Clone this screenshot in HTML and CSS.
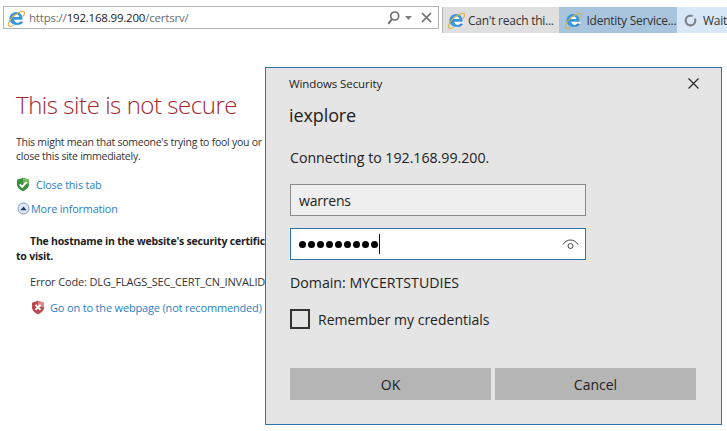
FILE: index.html
```html
<!DOCTYPE html>
<html lang="en">
<head>
<meta charset="utf-8">
<title>This site is not secure</title>
<link rel="stylesheet" href="styles.css">
</head>
<body>
<svg class="defs" width="0" height="0" aria-hidden="true">
  <defs>
    <g id="ie">
      <circle cx="10" cy="10.500" r="7.300" fill="#3a97da"/>
      <path d="M6.500 9c.5-2 2-3.200 3.800-3.200s3.100 1.200 3.500 3.200z" fill="#fff"/>
      <path d="M6.400 12h12v2.300h-3.800c-.9 1-2.200 1.400-3.500 1.100-1.500-.3-2.700-1.600-3.200-3.400z" fill="#fff"/>
      <path d="M14.700 14.300h3.300c-1 2.200-3.600 3.700-6.600 3.500 1.500-.4 2.600-1.800 3.300-3.500z" fill="#2f86cc"/>
      <path d="M1.600 18.200C.6 15.500 5 8.500 11 5.200c4-2.200 7-3.200 8-2.200s.4 3-1 5.200" fill="none" stroke="#dcae3f" stroke-width="1.200"/>
      <path d="M1.600 18.200c1 1.500 3.500 1.200 5.700 0" fill="none" stroke="#dcae3f" stroke-width="1.200"/>
    </g>
  </defs>
</svg>
<header class="toolbar">
  <div class="address">
    <svg class="ie-icon" viewBox="0 0 20 20"><use href="#ie"/></svg>
    <span class="url"><span class="dim">https://</span>192.168.99.200<span class="dim">/certsrv/</span></span>
    <span class="addr-tools">
      <svg class="tool" width="13" height="14" viewBox="0 0 13 14"><circle cx="7.700" cy="5" r="4" fill="none" stroke="#6e6e6e" stroke-width="1.700"/><path d="M5 8L1.300 12.800" stroke="#6e6e6e" stroke-width="2"/></svg>
      <svg class="tool" width="7" height="4" viewBox="0 0 7 4"><path d="M0 0h7L3.500 4z" fill="#808080"/></svg>
      <svg class="tool close-x" width="11" height="11" viewBox="0 0 11 11"><path d="M1 1l9 9M10 1l-9 9" stroke="#6e6e6e" stroke-width="1.700"/></svg>
    </span>
  </div>
  <nav class="tabs">
    <div class="tab tab-idle"><svg class="ie-icon" viewBox="0 0 20 20"><use href="#ie"/></svg><span>Can't reach thi...</span></div>
    <div class="tab tab-active"><svg class="ie-icon" viewBox="0 0 20 20"><use href="#ie"/></svg><span>Identity Service...</span></div>
    <div class="tab tab-wait"><svg class="spinner" width="13" height="13" viewBox="0 0 13 13"><circle cx="6.500" cy="6.500" r="4.800" fill="none" stroke="#7f8488" stroke-width="2.200"/><path d="M8.500 2.100a4.800 4.800 0 0 1 2.500 2.500" fill="none" stroke="#d8e8f7" stroke-width="2.400"/></svg><span>Wait</span></div>
  </nav>
</header>

<main class="page">
  <h1>This site is not secure</h1>
  <p class="lead">This might mean that someone's trying to fool you or<br>close this site immediately.</p>
  <a class="action close-tab"><svg width="14" height="15" viewBox="0 0 14 15"><path d="M7 .8l6 2v4.500c0 3.200-2.800 5.600-6 7-3.200-1.400-6-3.800-6-7V2.800z" fill="#3b8f3f"/><path d="M7 .8l6 2v4.500H7z" fill="#6fbb5a"/><path d="M3.700 7.300l2.500 2.500 4.300-4.700" fill="none" stroke="#fff" stroke-width="1.900"/></svg><span>Close this tab</span></a>
  <a class="action more"><svg width="13" height="13" viewBox="0 0 13 13"><circle cx="6.500" cy="6.500" r="5.500" fill="#dfe8f3" stroke="#7f9dc0"/><path d="M3.300 8.300h6.400L6.500 4.500z" fill="#1f3f6f"/></svg><span>More information</span></a>
  <section class="details">
    <p class="host"><strong>The hostname in the website's security certificate</strong></p>
    <p class="host-end"><strong>to visit.</strong></p>
    <p class="code">Error Code: DLG_FLAGS_SEC_CERT_CN_INVALID</p>
    <a class="action go"><svg width="14" height="15" viewBox="0 0 14 15"><path d="M7 .8l6 2v4.500c0 3.200-2.800 5.600-6 7-3.200-1.400-6-3.800-6-7V2.800z" fill="#b9474c"/><path d="M7 .8l6 2v4.500H7z" fill="#d9898c"/><path d="M4.500 4.800l5 5M9.500 4.800l-5 5" stroke="#fff" stroke-width="1.900"/></svg><span>Go on to the webpage (not recommended)</span></a>
  </section>
</main>

<div class="dialog" role="dialog">
  <div class="dlg-title"><span>Windows Security</span>
    <svg width="11" height="11" viewBox="0 0 11 11"><path d="M.5.500l10 10M10.500.500l-10 10" stroke="#222" stroke-width="1.100"/></svg>
  </div>
  <div class="dlg-app">iexplore</div>
  <div class="dlg-connect">Connecting to 192.168.99.200.</div>
  <div class="field field-user">warrens</div>
  <div class="field field-pass">
    <span class="dots"><i></i><i></i><i></i><i></i><i></i><i></i><i></i><i></i><i></i></span><span class="caret"></span>
    <svg class="eye" width="17" height="11" viewBox="0 0 17 11"><path d="M1 5.500C3 2.500 5.500 1 8.500 1s5.500 1.500 7.500 4.500" fill="none" stroke="#444"/><circle cx="8.500" cy="7" r="2.500" fill="none" stroke="#444"/></svg>
  </div>
  <div class="domain">Domain: MYCERTSTUDIES</div>
  <label class="remember"><span class="box"></span><span>Remember my credentials</span></label>
  <div class="buttons">
    <div class="btn">OK</div>
    <div class="btn">Cancel</div>
  </div>
</div>
</body>
</html>
```
FILE: styles.css
```css
* { box-sizing: border-box; }
html, body { margin: 0; padding: 0; }
body {
  width: 727px;
  height: 431px;
  overflow: hidden;
  background: #fff;
  font-family: "Open Sans", "Noto Sans", sans-serif;
  color: #222;
  position: relative;
}
.defs { position: absolute; }
.toolbar {
  display: flex;
  align-items: flex-start;
  padding: 6px 0 0 3px;
  height: 33px;
}
.address {
  width: 436px;
  height: 23px;
  border: 1px solid #b4b4b4;
  display: flex;
  align-items: center;
  padding-left: 3px;
  margin-right: 3px;
}
.ie-icon { width: 18px; height: 18px; flex: none; }
.url { font-size: 11.500px; margin-left: 4px; color: #222; flex: 1; letter-spacing: -0.2px; }
.dim { color: #6b6b6b; }
.addr-tools { display: flex; align-items: center; gap: 5px; padding-right: 6px; }
.close-x { margin-left: 4px; }
.tabs { display: flex; height: 26px; margin-top: 1px; flex: 1; overflow: hidden; border-left: 1px solid #b4b4b4; }
.tab { display: flex; align-items: center; font-size: 12px; color: #333; white-space: nowrap; padding-left: 4px; gap: 3px; letter-spacing: -0.25px; }
.tab-idle { width: 118px; background: #dfdfdf; }
.tab-active { width: 119px; background: #a9c5dd; padding-left: 5px; gap: 4px; }
.tab-wait { flex: 1; background: #d8e8f7; padding-left: 7px; gap: 6px; }
.page { width: 265px; padding: 55px 0 0 16px; overflow: hidden; white-space: nowrap; }
h1 { margin: 0 0 14px; font-size: 24px; line-height: 33px; font-weight: 300; color: #a3272d; letter-spacing: -0.45px; }
.lead { margin: 0 0 14px; font-size: 10.500px; line-height: 14px; color: #333; letter-spacing: -0.25px; }
.action { display: flex; align-items: center; color: #2a7fc4; font-size: 10.800px; line-height: 15px; letter-spacing: -0.15px; }
.close-tab { gap: 6px; margin-bottom: 9px; }
.more { gap: 1px; margin-left: 1px; }
.details { margin-top: 18px; }
.host { margin: 0 0 0 14px; font-size: 10.500px; line-height: 15px; letter-spacing: -0.2px; }
.host-end { margin: 0 0 10px; font-size: 10.500px; line-height: 15px; letter-spacing: -0.2px; }
.code { margin: 0 0 10px 14px; font-size: 11px; line-height: 16px; color: #333; letter-spacing: -0.15px; }
.go { gap: 5px; margin-left: 15px; font-size: 11px; letter-spacing: -0.17px; }

.dialog {
  position: absolute;
  left: 265px;
  top: 67px;
  width: 457px;
  height: 358px;
  background: #e5e5e5;
  border: 1px solid #2a76ab;
  padding: 0 24px;
  display: flex;
  flex-direction: column;
}
.dlg-title {
  display: flex;
  justify-content: space-between;
  align-items: center;
  font-size: 11.500px;
  height: 31px;
  margin-left: -1px;
  margin-right: -1px;
  letter-spacing: -0.1px;
}
.dlg-title svg { margin-right: -1px; }
.dlg-app { font-size: 18px; line-height: 24px; margin-top: 4px; margin-left: -1px; letter-spacing: -0.1px; }
.dlg-connect { font-size: 14.200px; line-height: 20px; margin-top: 21px; letter-spacing: -0.02px; }
.field { width: 296px; height: 32px; display: flex; align-items: center; padding-left: 8px; font-size: 14px; letter-spacing: -0.2px; }
.field-user { margin-top: 16px; border: 1px solid #8a8a8a; background: #efefef; }
.field-pass { margin-top: 12px; border: 1px solid #2a76ab; background: #fff; position: relative; }
.dots { display: flex; gap: 2px; }
.dots i { display: block; width: 7px; height: 7px; border-radius: 50%; background: #000; }
.caret { width: 1px; height: 20px; background: #111; margin-left: 1px; }
.eye { position: absolute; right: 6px; top: 10px; }
.domain { font-size: 14.200px; line-height: 20px; margin-top: 13px; letter-spacing: -0.02px; }
.remember { display: flex; align-items: center; gap: 8px; font-size: 14px; margin-top: 16px; }
.box { width: 20px; height: 20px; border: 2px solid #333; }
.buttons { display: flex; gap: 4px; margin-top: 39px; }
.btn { width: 201px; height: 32px; background: #b5b5b5; display: flex; align-items: center; justify-content: center; font-size: 14px; }
```
